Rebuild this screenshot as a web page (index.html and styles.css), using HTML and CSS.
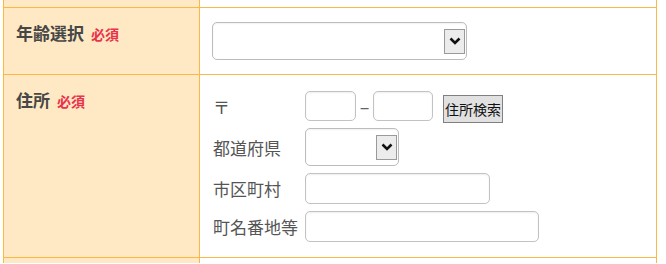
FILE: index.html
```html
<!DOCTYPE html>
<html lang="ja">
<head>
  <meta charset="UTF-8" />
  <meta name="viewport" content="width=device-width, initial-scale=1" />
  <title>お申し込みフォーム</title>
  <link rel="stylesheet" href="styles.css">
</head>
<body>
  <div class="form-table">
    <!-- previous row, cut off at the top -->
    <div class="form-row row-partial">
      <div class="row-head"></div>
      <div class="row-body"></div>
    </div>

    <div class="form-row">
      <div class="row-head">年齢選択<span class="must">必須</span></div>
      <div class="row-body">
        <div class="select select-wide">
          <span class="select-arrow">
            <svg width="12" height="8" viewBox="0 0 12 8"><path d="M1.5 1.5 L6 6 L10.5 1.5" fill="none" stroke="#111" stroke-width="2.6"/></svg>
          </span>
        </div>
      </div>
    </div>

    <div class="form-row">
      <div class="row-head">住所<span class="must">必須</span></div>
      <div class="row-body body-address">
        <div class="address-grid">
          <span class="addr-label">〒</span>
          <div class="zip-line">
            <input type="text" class="zip zip-1" />
            <span class="zip-dash">–</span>
            <input type="text" class="zip zip-2" />
            <button class="zip-btn">住所検索</button>
          </div>

          <span class="addr-label">都道府県</span>
          <div class="select select-pref">
            <span class="select-arrow">
              <svg width="12" height="8" viewBox="0 0 12 8"><path d="M1.5 1.5 L6 6 L10.5 1.5" fill="none" stroke="#111" stroke-width="2.6"/></svg>
            </span>
          </div>

          <span class="addr-label">市区町村</span>
          <input type="text" class="text-input input-city" />

          <span class="addr-label">町名番地等</span>
          <input type="text" class="text-input input-street" />
        </div>
      </div>
    </div>

    <!-- next row, cut off at the bottom -->
    <div class="form-row row-partial-end">
      <div class="row-head"></div>
      <div class="row-body"></div>
    </div>
  </div>
</body>
</html>
```

FILE: styles.css
```css
* {
  box-sizing: border-box;
  margin: 0;
  padding: 0;
}

html, body {
  height: 100%;
  overflow: hidden;
  background: #fff;
  font-family: "Noto Sans CJK JP", "Noto Sans", sans-serif;
}

.form-table {
  width: 654px;
  margin-left: 3px;
  border-left: 1px solid #fcb847;
  border-right: 1px solid #fcb847;
}

.form-row {
  display: grid;
  grid-template-columns: 196px 1fr;
  border-top: 1px solid #fcb847;
}

.row-partial {
  border-top: none;
  height: 7px;
}

.row-partial-end {
  height: 6px;
}

.row-head {
  background-color: #ffe9c5;
  border-right: 1px solid #fcb847;
  padding: 14px 12px;
  font-size: 17px;
  line-height: 21px;
  font-weight: bold;
  color: #474747;
}

.row-partial .row-head,
.row-partial .row-body,
.row-partial-end .row-head,
.row-partial-end .row-body {
  padding: 0;
}

.must {
  margin-left: 7px;
  font-size: 14px;
  font-weight: bold;
  color: #e8334a;
}

.row-body {
  padding: 14px 12px;
}

.body-address {
  padding: 16px 12px 15px;
}

/* fake select boxes */
.select {
  display: flex;
  justify-content: flex-end;
  align-items: center;
  height: 38px;
  padding-right: 1px;
  background: #fff;
  border: 1px solid #bcbcbc;
  border-radius: 5px;
  box-shadow: inset 0 1px 2px rgba(0, 0, 0, 0.06);
}

.select-wide {
  width: 255px;
}

.select-pref {
  width: 94px;
}

.select-arrow {
  display: flex;
  align-items: center;
  justify-content: center;
  width: 21px;
  height: 25px;
  background: #ececec;
  border: 1px solid #9a9a9a;
}

/* address block */
.address-grid {
  display: grid;
  grid-template-columns: 93px auto;
  row-gap: 7px;
  align-items: center;
  justify-items: start;
}

.addr-label {
  font-size: 17px;
  color: #555;
  padding-left: 1px;
}

.zip-line {
  display: flex;
  align-items: flex-start;
  height: 30px;
}

.zip,
.text-input {
  height: 30px;
  border: 1px solid #c2c2c2;
  border-radius: 5px;
  background: #fff;
  box-shadow: inset 0 1px 2px rgba(0, 0, 0, 0.07);
  font-size: 15px;
  padding: 0 6px;
}

.zip-1 {
  width: 51px;
}

.zip-2 {
  width: 60px;
}

.zip-dash {
  width: 17px;
  text-align: center;
  font-size: 18px;
  line-height: 30px;
  color: #666;
}

.zip-btn {
  flex-shrink: 0;
  width: 60px;
  height: 28px;
  margin-top: 4px;
  margin-left: 10px;
  background: #e1e1e1;
  border: 1px solid #808080;
  font-family: "Noto Sans CJK JP", sans-serif;
  font-size: 14px;
  line-height: 26px;
  color: #111;
  padding: 0;
}

.text-input {
  height: 31px;
}

.input-city {
  width: 185px;
}

.input-street {
  width: 234px;
}
```
